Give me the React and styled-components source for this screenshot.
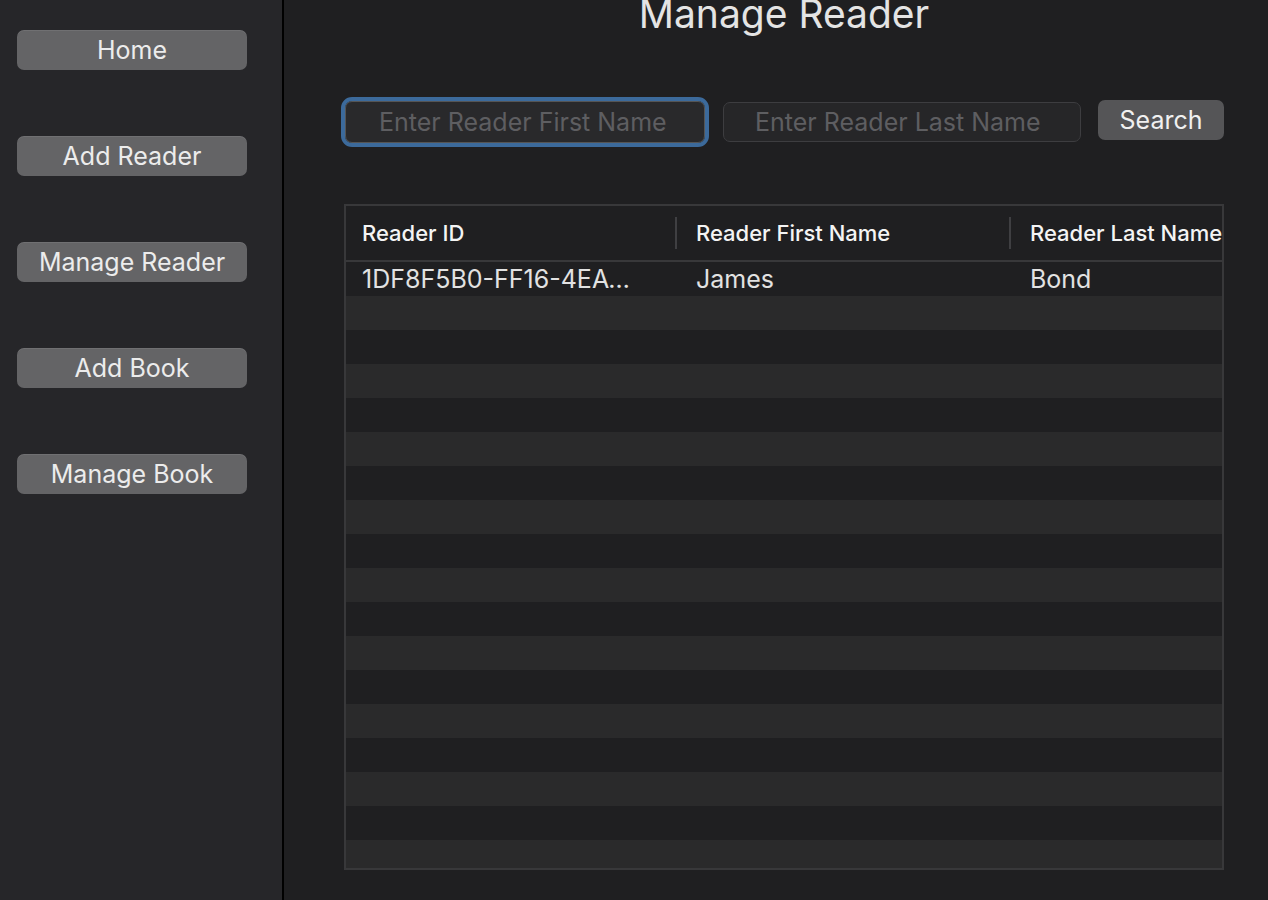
import styled, { createGlobalStyle } from 'styled-components';

const GlobalStyle = createGlobalStyle`
  html, body {
    margin: 0;
    padding: 0;
    background: #1f1f21;
    font-family: 'Inter', 'Noto Sans', sans-serif;
    overflow: hidden;
  }
`;

const Layout = styled.div`
  display: flex;
  width: 1268px;
  height: 900px;
  overflow: hidden;
`;

const Sidebar = styled.nav`
  width: 284px;
  flex-shrink: 0;
  background: #262629;
  border-right: 2px solid #000;
  display: flex;
  flex-direction: column;
  gap: 66px;
  padding: 30px 0 0 17px;
  box-sizing: border-box;
`;

const NavButton = styled.button`
  width: 230px;
  height: 40px;
  border: none;
  border-radius: 7px;
  background: #646466;
  color: #ececec;
  font-family: 'Inter', sans-serif;
  font-size: 25px;
  line-height: 40px;
  padding: 0;
  box-shadow: inset 0 1px 0 rgba(255, 255, 255, 0.08);
`;

const Main = styled.main`
  flex: 1;
  display: flex;
  flex-direction: column;
  align-items: center;
  padding: 0 44px 0 60px;
`;

const Title = styled.h1`
  margin: -9px 0 0;
  font-size: 39px;
  font-weight: 400;
  line-height: 46px;
  color: #e4e4e4;
`;

const SearchRow = styled.div`
  align-self: stretch;
  display: flex;
  align-items: center;
  margin-top: 64px;
`;

const FirstField = styled.input`
  width: 360px;
  height: 42px;
  box-sizing: border-box;
  background: #29292b;
  border: 1px solid #555;
  border-radius: 7px;
  outline: 4px solid #3c6a9b;
  outline-offset: 0;
  margin: 0 18px 0 1px;
  color: #e0e0e0;
  font-family: 'Inter', sans-serif;
  font-size: 25px;
  padding: 0 0 0 33px;
  &::placeholder { color: #5e5e61; }
`;

const LastField = styled.input`
  width: 358px;
  height: 40px;
  box-sizing: border-box;
  background: #262628;
  border: 1px solid #3d3d40;
  border-radius: 7px;
  color: #e0e0e0;
  font-family: 'Inter', sans-serif;
  font-size: 25px;
  padding: 0 0 0 31px;
  &::placeholder { color: #5e5e61; }
`;

const SearchButton = styled.button`
  width: 126px;
  height: 40px;
  margin: -4px 0 0 17px;
  border: none;
  border-radius: 7px;
  background: #555557;
  color: #f0f0f0;
  font-family: 'Inter', sans-serif;
  font-size: 25px;
  padding: 0;
`;

const Table = styled.div`
  align-self: stretch;
  margin-top: 61px;
  height: 666px;
  box-sizing: border-box;
  border: 2px solid #38383a;
  display: flex;
  flex-direction: column;
  overflow: hidden;
`;

const columns = '329px 334px 1fr';

const HeaderRow = styled.div`
  display: grid;
  grid-template-columns: ${columns};
  height: 54px;
  flex-shrink: 0;
  border-bottom: 2px solid #38383a;
  background: #1f1f21;
`;

const HeaderCell = styled.div`
  display: flex;
  align-items: center;
  padding-left: ${p => (p.$first ? '16px' : '19px')};
  font-size: 22px;
  font-weight: 500;
  color: #f4f4f4;
  white-space: nowrap;
  overflow: hidden;
  border-left: ${p => (p.$first ? 'none' : '2px solid #3f3f42')};
  height: ${p => (p.$first ? 'auto' : '32px')};
  align-self: ${p => (p.$first ? 'stretch' : 'center')};
`;

const Row = styled.div`
  display: grid;
  grid-template-columns: ${columns};
  height: 34px;
  flex-shrink: 0;
  background: ${p => (p.$alt ? '#2a2a2b' : '#1f1f21')};
`;

const Cell = styled.div`
  min-width: 0;
  line-height: 34px;
  padding-left: ${p => (p.$first ? '16px' : '21px')};
  padding-right: ${p => (p.$first ? '38px' : '16px')};
  font-size: 25px;
  color: #e2e2e2;
  white-space: nowrap;
  overflow: hidden;
  text-overflow: ellipsis;
`;

const navItems = ['Home', 'Add Reader', 'Manage Reader', 'Add Book', 'Manage Book'];

export default function App() {
  const rows = Array.from({ length: 18 }, (_, i) => i);
  return (
    <>
      <GlobalStyle />
      <Layout>
        <Sidebar>
          {navItems.map(item => (
            <NavButton key={item}>{item}</NavButton>
          ))}
        </Sidebar>
        <Main>
          <Title>Manage Reader</Title>
          <SearchRow>
            <FirstField placeholder="Enter Reader First Name" />
            <LastField placeholder="Enter Reader Last Name" />
            <SearchButton>Search</SearchButton>
          </SearchRow>
          <Table>
            <HeaderRow>
              <HeaderCell $first>Reader ID</HeaderCell>
              <HeaderCell>Reader First Name</HeaderCell>
              <HeaderCell>Reader Last Name</HeaderCell>
            </HeaderRow>
            {rows.map(i =>
              i === 0 ? (
                <Row key={i}>
                  <Cell $first>1DF8F5B0-FF16-4EA1-9C2B-7A1D3E5F6A8B</Cell>
                  <Cell>James</Cell>
                  <Cell>Bond</Cell>
                </Row>
              ) : (
                <Row key={i} $alt={i % 2 === 1} />
              )
            )}
          </Table>
        </Main>
      </Layout>
    </>
  );
}
